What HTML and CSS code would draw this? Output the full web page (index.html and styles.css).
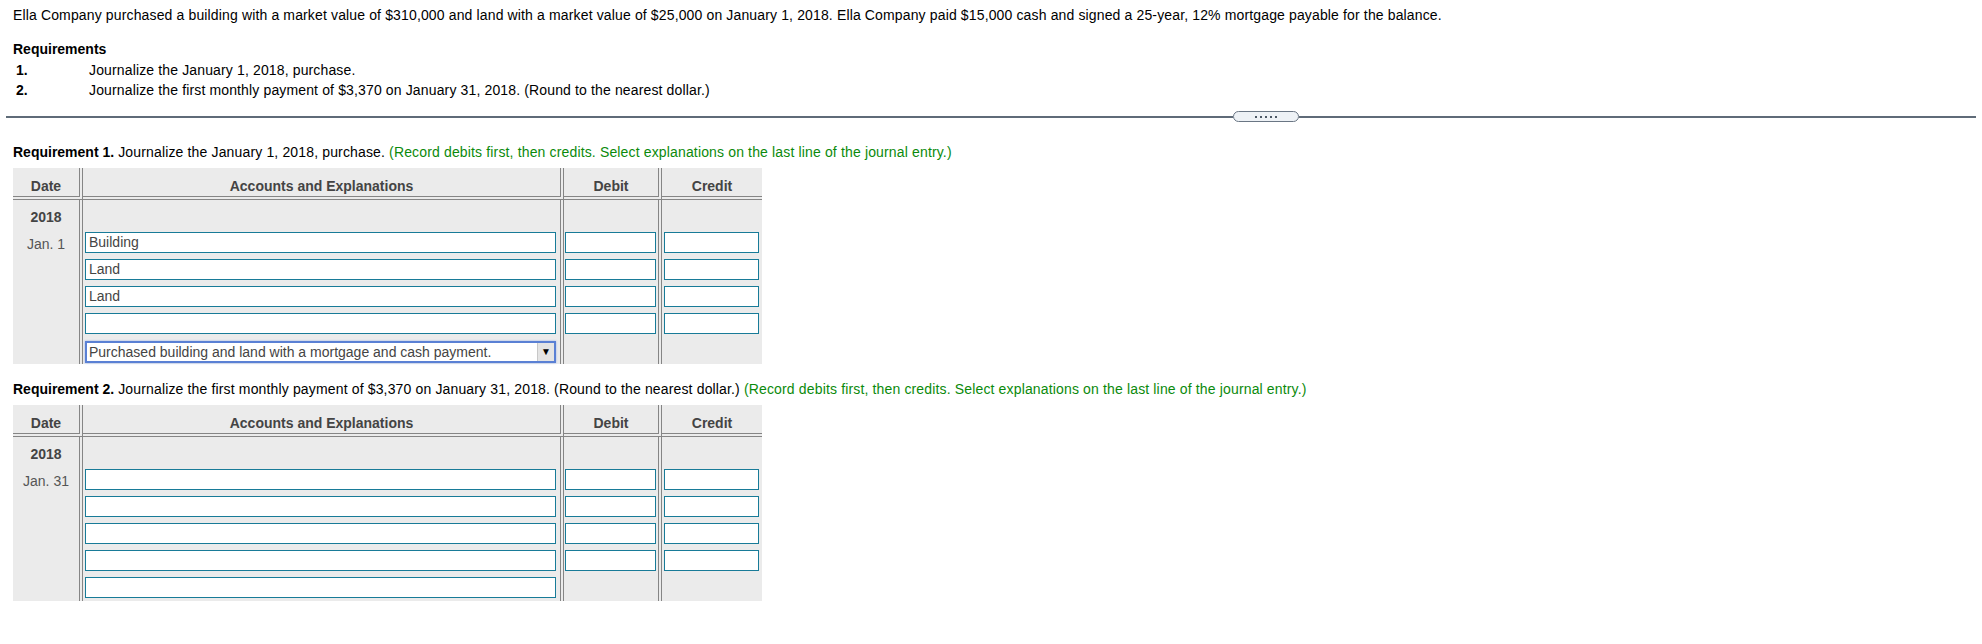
FILE: index.html
```html
<!DOCTYPE html>
<html lang="en">
<head>
<meta charset="utf-8">
<title>Ella Company</title>
<link rel="stylesheet" href="styles.css">
</head>
<body>
<div class="page">
  <p class="problem">Ella Company purchased a building with a market value of $310,000 and land with a market value of $25,000 on January 1, 2018. Ella Company paid $15,000 cash and signed a 25-year, 12% mortgage payable for the balance.</p>
  <h3 class="req-title">Requirements</h3>
  <ol class="req-list">
    <li><span class="num">1.</span><span class="txt">Journalize the January 1, 2018, purchase.</span></li>
    <li><span class="num">2.</span><span class="txt">Journalize the first monthly payment of $3,370 on January 31, 2018. (Round to the nearest dollar.)</span></li>
  </ol>
</div>

<div class="divider">
  <span class="line grow"></span>
  <span class="pill"><i></i><i></i><i></i><i></i><i></i></span>
  <span class="line tail"></span>
</div>

<div class="page">
  <p class="req-head"><b>Requirement 1.</b> Journalize the January 1, 2018, purchase. <span class="hint">(Record debits first, then credits. Select explanations on the last line of the journal entry.)</span></p>
  <table class="journal">
    <thead>
      <tr><th class="c-date">Date</th><th class="c-acct">Accounts and Explanations</th><th class="c-deb">Debit</th><th class="c-cred">Credit</th></tr>
    </thead>
    <tbody>
      <tr class="year"><td class="c-date">2018</td><td class="c-acct"></td><td class="c-deb"></td><td class="c-cred"></td></tr>
      <tr class="entry"><td class="c-date day">Jan. 1</td><td class="c-acct"><div class="field acct">Building</div></td><td class="c-deb"><div class="field deb"></div></td><td class="c-cred"><div class="field cred"></div></td></tr>
      <tr class="entry"><td class="c-date"></td><td class="c-acct"><div class="field acct">Land</div></td><td class="c-deb"><div class="field deb"></div></td><td class="c-cred"><div class="field cred"></div></td></tr>
      <tr class="entry"><td class="c-date"></td><td class="c-acct"><div class="field acct">Land</div></td><td class="c-deb"><div class="field deb"></div></td><td class="c-cred"><div class="field cred"></div></td></tr>
      <tr class="entry"><td class="c-date"></td><td class="c-acct"><div class="field acct"></div></td><td class="c-deb"><div class="field deb"></div></td><td class="c-cred"><div class="field cred"></div></td></tr>
      <tr class="entry"><td class="c-date"></td><td class="c-acct"><div class="select"><span class="sel-text">Purchased building and land with a mortgage and cash payment.</span><span class="sel-btn">&#9660;</span></div></td><td class="c-deb"></td><td class="c-cred"></td></tr>
    </tbody>
  </table>

  <p class="req-head second"><b>Requirement 2.</b> Journalize the first monthly payment of $3,370 on January 31, 2018. (Round to the nearest dollar.) <span class="hint">(Record debits first, then credits. Select explanations on the last line of the journal entry.)</span></p>
  <table class="journal">
    <thead>
      <tr><th class="c-date">Date</th><th class="c-acct">Accounts and Explanations</th><th class="c-deb">Debit</th><th class="c-cred">Credit</th></tr>
    </thead>
    <tbody>
      <tr class="year"><td class="c-date">2018</td><td class="c-acct"></td><td class="c-deb"></td><td class="c-cred"></td></tr>
      <tr class="entry"><td class="c-date day">Jan. 31</td><td class="c-acct"><div class="field acct"></div></td><td class="c-deb"><div class="field deb"></div></td><td class="c-cred"><div class="field cred"></div></td></tr>
      <tr class="entry"><td class="c-date"></td><td class="c-acct"><div class="field acct"></div></td><td class="c-deb"><div class="field deb"></div></td><td class="c-cred"><div class="field cred"></div></td></tr>
      <tr class="entry"><td class="c-date"></td><td class="c-acct"><div class="field acct"></div></td><td class="c-deb"><div class="field deb"></div></td><td class="c-cred"><div class="field cred"></div></td></tr>
      <tr class="entry"><td class="c-date"></td><td class="c-acct"><div class="field acct"></div></td><td class="c-deb"><div class="field deb"></div></td><td class="c-cred"><div class="field cred"></div></td></tr>
      <tr class="entry"><td class="c-date"></td><td class="c-acct"><div class="field acct"></div></td><td class="c-deb"></td><td class="c-cred"></td></tr>
    </tbody>
  </table>
</div>
</body>
</html>
```

FILE: styles.css
```css
html, body {
  margin: 0;
  padding: 0;
  background: #ffffff;
}
body {
  font-family: "Liberation Sans", Arial, sans-serif;
  font-size: 14px;
  color: #000;
}
.page {
  padding-left: 13px;
}
.problem {
  margin: 0;
  padding-top: 7px;
  line-height: 16px;
  letter-spacing: 0.14px;
}
.req-title {
  margin: 18px 0 0 0;
  font-size: 14px;
  font-weight: bold;
  line-height: 16px;
}
.req-list {
  list-style: none;
  margin: 3px 0 0 0;
  padding: 0;
}
.req-list li {
  display: flex;
  line-height: 20px;
}
.req-list .txt {
  letter-spacing: 0.14px;
}
.req-list .num {
  font-weight: bold;
  width: 76px;
  padding-left: 3px;
  box-sizing: border-box;
}
.divider {
  display: flex;
  align-items: center;
  margin: 11px 6px 0 6px;
  height: 11px;
}
.line {
  height: 2px;
  background: #5f6b78;
}
.line.grow { flex: 1; }
.line.tail { width: 677px; }
.pill {
  width: 64px;
  height: 9px;
  border: 1px solid #6a7684;
  border-radius: 6px;
  background: #eef2f6;
  display: flex;
  align-items: center;
  justify-content: center;
  gap: 3px;
}
.pill i {
  display: block;
  width: 2px;
  height: 2px;
  background: #4d5966;
}
.req-head {
  margin: 22px 0 0 0;
  line-height: 16px;
  letter-spacing: 0.15px;
}
.req-head b {
  letter-spacing: 0;
}
.req-head.second {
  margin-top: 17px;
}
.hint {
  color: #0b8a0b;
}
.journal {
  margin-top: 8px;
  border-collapse: separate;
  border-spacing: 0;
  background: #ebebeb;
  table-layout: fixed;
  width: 749px;
}
.journal th, .journal td {
  padding: 0;
  vertical-align: top;
}
.journal .c-date { width: 66px; border-right: 4px double #858585; text-align: center; }
.journal .c-acct { width: 477px; border-right: 4px double #858585; }
.journal .c-deb { width: 94px; border-right: 4px double #858585; }
.journal .c-cred { width: 100px; }
.journal th {
  height: 18px;
  padding-top: 10px;
  line-height: 16px;
  font-weight: bold;
  color: #444;
  text-align: center;
  border-bottom: 4px double #858585;
}
.journal tr.year td {
  height: 20px;
  padding-top: 9px;
  line-height: 16px;
  font-weight: bold;
  color: #444;
}
.journal tbody tr.entry td {
  height: 27px;
}
.journal tbody tr.entry td.day {
  color: #555;
  padding-top: 7px;
  height: 20px;
  line-height: 16px;
}
.field {
  box-sizing: border-box;
  height: 21px;
  margin-top: 3px;
  border: 1px solid #187b98;
  background: #fff;
  color: #444;
  line-height: 19px;
  padding-left: 3px;
  white-space: nowrap;
  overflow: hidden;
}
.field.acct { margin-left: 2px; width: 471px; }
.field.deb { margin-left: 1px; width: 91px; }
.field.cred { margin-left: 2px; width: 95px; }
.select {
  box-sizing: border-box;
  margin: 4px 0 0 2px;
  width: 471px;
  height: 22px;
  border: 2px solid #5a80d4;
  box-shadow: 0 0 2px #9db4ea;
  background: #fff;
  display: flex;
  align-items: stretch;
}
.sel-text {
  flex: 1;
  color: #444;
  line-height: 18px;
  padding-left: 2px;
  white-space: nowrap;
  overflow: hidden;
}
.sel-btn {
  width: 16px;
  background: #e4e4e4;
  border-left: 1px solid #c8c8c8;
  font-size: 10px;
  line-height: 18px;
  text-align: center;
  color: #000;
}
```
